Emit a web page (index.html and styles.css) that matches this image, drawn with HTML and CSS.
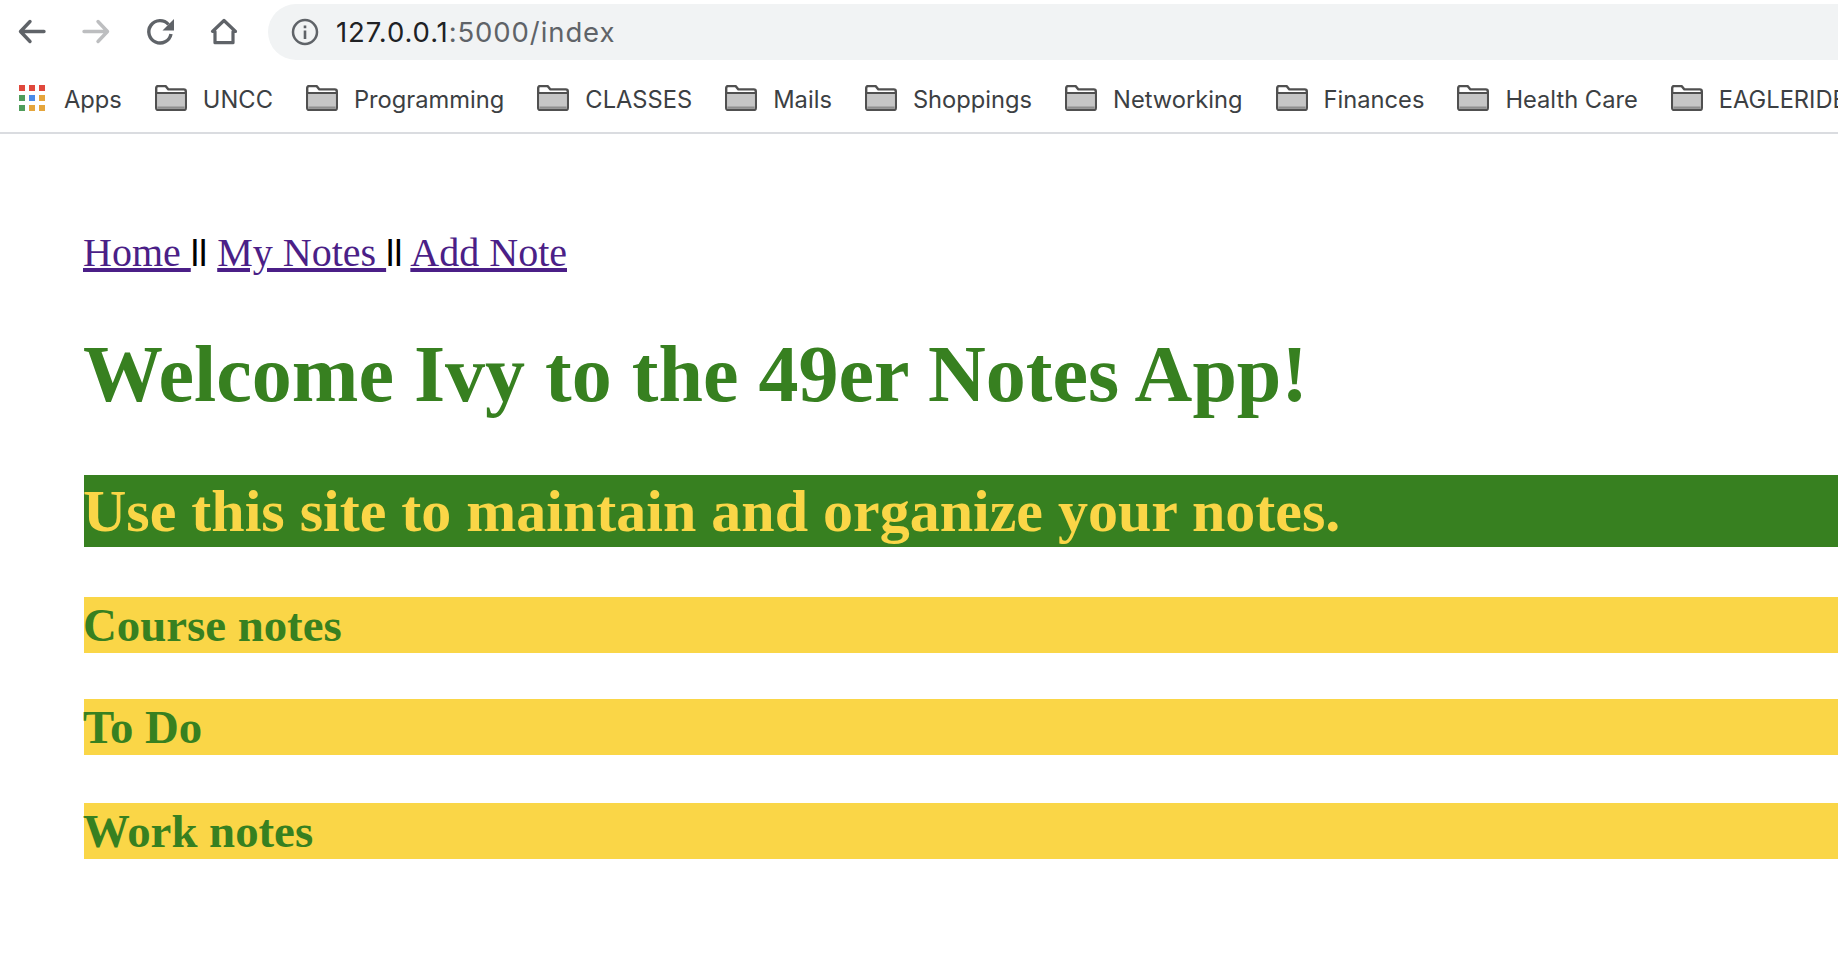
FILE: index.html
```html
<!DOCTYPE html>
<html lang="en">
<head>
<meta charset="UTF-8">
<title>49er Notes App</title>
<link rel="stylesheet" href="styles.css">
</head>
<body>
<svg class="defs" width="0" height="0">
    <symbol id="folder" viewBox="0 0 32 26">
        <path d="M1.200 23V3a2 2 0 0 1 2-2h6.500a2 2 0 0 1 1.500.700l1.800 2.300a1 1 0 0 0 .800.400H28.800a2 2 0 0 1 2 2V23a2 2 0 0 1-2 2H3.200a2 2 0 0 1-2-2z" fill="#fff" stroke="#505050" stroke-width="2.400"/>
        <path d="M2.400 8.500h27.200v15.300H2.400z" fill="#c6c6c6"/>
        <path d="M2 8h28" stroke="#505050" stroke-width="2"/>
        <path d="M2.400 21.500h27.200v2.300H2.400z" fill="#8e8e8e"/>
    </symbol>
</svg>
<div class="toolbar">
    <div class="nav-icons">
        <svg width="32" height="32" viewBox="0 0 32 32"><path d="M28 15.500H5.500M14 5.500l-9.500 10 9.500 10" fill="none" stroke="#5f6368" stroke-width="3.400" stroke-linecap="round" stroke-linejoin="round"/></svg>
        <svg width="32" height="32" viewBox="0 0 32 32"><path d="M4 15.500h22.500M18 5.500l9.500 10-9.500 10" fill="none" stroke="#bdbec0" stroke-width="3.400" stroke-linecap="round" stroke-linejoin="round"/></svg>
        <svg width="32" height="32" viewBox="0 0 32 32"><path d="M24.500 8.500A11.200 11.200 0 1 0 27 18" fill="none" stroke="#5f6368" stroke-width="3.400"/><path d="M30 3v11.500H18.500z" fill="#5f6368"/></svg>
        <svg width="32" height="32" viewBox="0 0 32 32"><path d="M16 4.500 4.500 15.500H7v11.200h18V15.500h2.500z" fill="none" stroke="#5f6368" stroke-width="3.200" stroke-linejoin="round"/></svg>
    </div>
    <div class="address">
        <svg width="30" height="30" viewBox="0 0 30 30"><circle cx="15" cy="15" r="12" fill="none" stroke="#5f6368" stroke-width="2.500"/><path d="M13.700 13.500h2.600V22h-2.600zM13.700 8.500h2.600v2.700h-2.600z" fill="#5f6368"/></svg>
        <span class="host">127.0.0.1</span><span class="path">:5000/index</span>
    </div>
</div>
<div class="bookmarks">
    <a class="bm apps">
        <svg width="27" height="27" viewBox="0 0 27 27">
            <path d="M0 0h6v6H0zM10 0h6v6h-6zM20 0h6v6h-6z" fill="#e0483c"/>
            <path d="M0 10h6v6H0z" fill="#4f9d5b"/><path d="M10 10h6v6h-6z" fill="#4a8be8"/><path d="M20 10h6v6h-6z" fill="#e5a53c"/>
            <path d="M0 20h6v6H0z" fill="#4f9d5b"/><path d="M10 20h6v6h-6zM20 20h6v6h-6z" fill="#e5a53c"/>
        </svg>
        <span>Apps</span>
    </a>
    <a class="bm"><svg class="folder"><use href="#folder"/></svg><span>UNCC</span></a>
    <a class="bm"><svg class="folder"><use href="#folder"/></svg><span>Programming</span></a>
    <a class="bm"><svg class="folder"><use href="#folder"/></svg><span>CLASSES</span></a>
    <a class="bm"><svg class="folder"><use href="#folder"/></svg><span>Mails</span></a>
    <a class="bm"><svg class="folder"><use href="#folder"/></svg><span>Shoppings</span></a>
    <a class="bm"><svg class="folder"><use href="#folder"/></svg><span>Networking</span></a>
    <a class="bm"><svg class="folder"><use href="#folder"/></svg><span>Finances</span></a>
    <a class="bm"><svg class="folder"><use href="#folder"/></svg><span>Health Care</span></a>
    <a class="bm"><svg class="folder"><use href="#folder"/></svg><span>EAGLERIDER</span></a>
</div>
<div class="page">
    <nav class="links"><a href="#">Home </a><span class="sep">ll</span> <a href="#">My Notes </a><span class="sep">ll</span> <a href="#">Add Note</a></nav>
    <h1>Welcome Ivy to the 49er Notes App!</h1>
    <h2>Use this site to maintain and organize your notes.</h2>
    <h3>Course notes</h3>
    <h3>To Do</h3>
    <h3>Work notes</h3>
</div>
</body>
</html>
```

FILE: styles.css
```css
html, body { overflow: hidden; }
body { margin: 0; background: #fff; font-family: "Liberation Serif", serif; height: 966px; }
.defs { position: absolute; }

.toolbar { display: flex; align-items: center; height: 64px; padding: 0 0 0 16px; }
.nav-icons { display: flex; gap: 32px; width: 252px; flex: none; }
.address { flex: 1; display: flex; align-items: center; height: 56px; padding-left: 22px; margin-right: -60px; border-radius: 28px; background: #f1f3f4; font-family: Inter, "Noto Sans", sans-serif; font-size: 27.5px; letter-spacing: 0.9px; }
.address svg { margin-right: 16px; }
.host { color: #202124; }
.path { color: #5f6368; }

.bookmarks { display: flex; align-items: center; gap: 33px; height: 68px; padding-left: 19px; border-bottom: 2px solid #dadce0; white-space: nowrap; overflow: hidden; font-family: Inter, "Noto Sans", sans-serif; font-size: 23.7px; color: #3c4043; }
.bm { display: flex; align-items: center; gap: 16px; flex: none; }
.bm span { padding-top: 3px; }
.apps { gap: 18px; }
.apps svg { flex: none; }
.folder { width: 32px; height: 26px; }

.page { padding: 96px 0 0 84px; }
.links { font-size: 40px; line-height: 46px; color: #000; text-indent: -1px; }
.links a { color: #4b1f87; }
.sep { font-family: "Liberation Sans", sans-serif; font-size: 37px; }
h1 { margin: 51px 0 55px; font-size: 80px; line-height: 92px; color: #378020; text-indent: -1px; }
h2 { margin: 0 0 50px; font-size: 60px; line-height: 72px; color: #fad647; background: #378020; text-indent: -1px; }
h3 { margin: 0 0 46px; font-size: 46.8px; line-height: 56px; color: #378020; background: #fad647; text-indent: -1px; }
h3:last-child { margin-top: 48px; }
```
